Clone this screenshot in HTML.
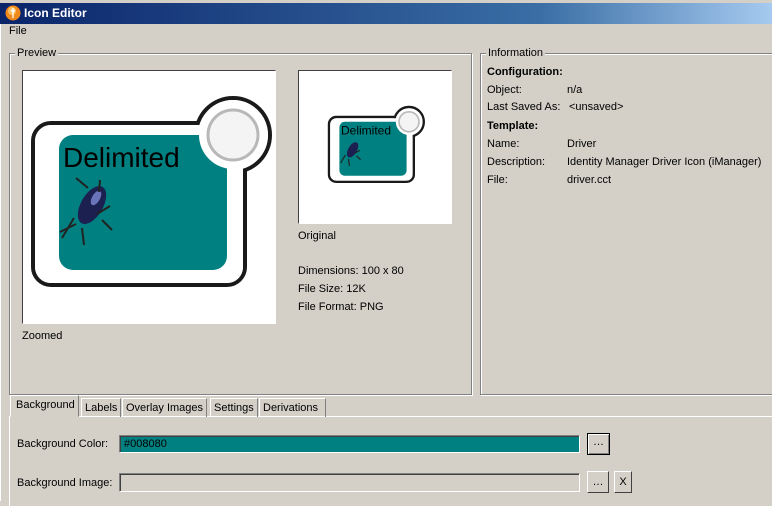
<!DOCTYPE html>
<html><head><meta charset="utf-8"><style>
*{margin:0;padding:0;box-sizing:border-box}
body{width:772px;height:501px;background:#d4d0c8;font:11px "Liberation Sans",sans-serif;color:#000;position:relative;overflow:hidden}
.a{position:absolute;white-space:nowrap}
.title{left:0;top:0;width:772px;height:24px;background:linear-gradient(90deg,#0a246a,#3a6ea5 70%,#a6caf0);border-top:3px solid #d4d0c8}
.title span{position:absolute;left:24px;top:3px;color:#fff;font-weight:bold;font-size:12px}
.grp{border:1px solid #808080;box-shadow:1px 1px 0 #fff inset,1px 1px 0 #fff}
.leg{background:#d4d0c8;padding:0 2px}
.box{background:#fff;border:1px solid;border-color:#404040 #fff #fff #404040}
.sunk{border:1px solid;border-color:#808080 #fff #fff #808080;box-shadow:inset 1px 1px 0 #404040}
.btn{background:#d4d0c8;border:1px solid;border-color:#fff #404040 #404040 #fff;text-align:center;line-height:16px}
.tab{top:398px;height:19px;border:1px solid;border-color:#fff #808080 transparent #fff;padding:3px 3px 0;border-bottom:none}
</style></head><body>
<div class="a title"><span>Icon Editor</span>
<svg class="a" style="left:5px;top:2px" width="16" height="16"><circle cx="8" cy="8" r="7.5" fill="#f08a1c"/><circle cx="7" cy="6" r="4" fill="#fcc060"/><path d="M8 3v10M6 5l2 2 2-2" stroke="#fff" stroke-width="1.3" fill="none"/></svg></div>
<div class="a" style="left:0;top:24px;width:3px;height:477px;background:#d4d0c8;border-left:1px solid #fff"></div>
<div class="a" style="left:9px;top:25px">File</div>
<div class="a grp" style="left:9px;top:53px;width:463px;height:342px"></div>
<div class="a leg" style="left:15px;top:47px">Preview</div>
<div class="a grp" style="left:480px;top:53px;width:295px;height:342px"></div>
<div class="a leg" style="left:486px;top:47px">Information</div>
<div class="a box" style="left:22px;top:70px;width:254px;height:254px;overflow:hidden">
<svg width="252" height="252" style="position:absolute;left:0;top:0">
<g transform="translate(-23 -71)">
<rect x="33" y="123" width="212" height="162" rx="18" fill="#fff" stroke="#1a1a1a" stroke-width="4"/>
<circle cx="233" cy="135" r="37" fill="#fff" stroke="#1a1a1a" stroke-width="4"/>
<rect x="35" y="125" width="208" height="158" rx="16" fill="#fff"/>
<circle cx="233" cy="135" r="35" fill="#fff"/>
<rect x="59" y="135" width="168" height="135" rx="14" fill="#008080"/>
<circle cx="233" cy="135" r="34" fill="#fff"/>
<circle cx="233" cy="135" r="25" fill="#f4f4f4" stroke="#b8b8b8" stroke-width="3"/>
<text x="63" y="167" font-family="Liberation Sans,sans-serif" font-size="28" fill="#000">Delimited</text>
<ellipse cx="92" cy="205" rx="11" ry="21" transform="rotate(30 92 205)" fill="#1c2050"/>
<ellipse cx="96" cy="198" rx="4" ry="8" transform="rotate(30 96 198)" fill="#6a74b8"/>
<path d="M74 218 L62 238 M76 224 L60 232 M82 228 L84 245 M97 214 L110 206 M102 220 L112 230 M88 188 L76 178 M99 192 L100 180" stroke="#222" stroke-width="2"/>
</g></svg></div>
<div class="a" style="left:22px;top:330px">Zoomed</div>
<div class="a box" style="left:298px;top:70px;width:154px;height:154px;overflow:hidden">
<svg width="152" height="152" style="position:absolute;left:0;top:0">
<g transform="translate(16.8 -3.2) scale(0.4)">
<rect x="33" y="123" width="212" height="162" rx="18" fill="#fff" stroke="#1a1a1a" stroke-width="6"/>
<circle cx="233" cy="135" r="37" fill="#fff" stroke="#1a1a1a" stroke-width="6"/>
<rect x="36" y="126" width="206" height="156" rx="16" fill="#fff"/>
<circle cx="233" cy="135" r="34" fill="#fff"/>
<rect x="59" y="135" width="168" height="135" rx="14" fill="#008080"/>
<circle cx="233" cy="135" r="33" fill="#fff"/>
<circle cx="233" cy="135" r="25" fill="#f4f4f4" stroke="#b8b8b8" stroke-width="4"/>
<text x="63" y="167" font-family="Liberation Sans,sans-serif" font-size="30" fill="#000">Delimited</text>
<ellipse cx="92" cy="205" rx="11" ry="21" transform="rotate(30 92 205)" fill="#1c2050"/>
<path d="M74 218 L62 238 M82 228 L84 245 M97 214 L110 206 M102 220 L112 230" stroke="#222" stroke-width="3"/>
</g></svg></div>
<div class="a" style="left:298px;top:230px">Original</div>
<div class="a" style="left:298px;top:265px">Dimensions: 100 x 80</div>
<div class="a" style="left:298px;top:283px">File Size: 12K</div>
<div class="a" style="left:298px;top:301px">File Format: PNG</div>
<div class="a" style="left:487px;top:66px;font-weight:bold">Configuration:</div>
<div class="a" style="left:487px;top:84px">Object:</div><div class="a" style="left:567px;top:84px">n/a</div>
<div class="a" style="left:487px;top:101px">Last Saved As:</div><div class="a" style="left:569px;top:101px">&lt;unsaved&gt;</div>
<div class="a" style="left:487px;top:120px;font-weight:bold">Template:</div>
<div class="a" style="left:487px;top:138px">Name:</div><div class="a" style="left:567px;top:138px">Driver</div>
<div class="a" style="left:487px;top:156px">Description:</div><div class="a" style="left:567px;top:156px">Identity Manager Driver Icon (iManager)</div>
<div class="a" style="left:487px;top:174px">File:</div><div class="a" style="left:567px;top:174px">driver.cct</div>
<div class="a" style="left:9px;top:416px;width:770px;height:90px;border-left:1px solid #fff;border-top:1px solid #fff"></div>
<div class="a tab" style="left:10px;top:395px;height:22px;padding-left:5px;background:#d4d0c8;z-index:2;border-bottom:1px solid #d4d0c8">Background</div>
<div class="a tab" style="left:81px">Labels</div>
<div class="a tab" style="left:122px">Overlay Images</div>
<div class="a tab" style="left:210px">Settings</div>
<div class="a tab" style="left:259px;width:67px">Derivations</div>
<div class="a" style="left:17px;top:438px">Background Color:</div>
<div class="a sunk" style="left:119px;top:435px;width:461px;height:18px;background:#008080;padding:2px 0 0 4px">#008080</div>
<div class="a btn" style="left:587px;top:433px;width:23px;height:22px;border:1px solid #000;box-shadow:inset 1px 1px 0 #fff,inset -1px -1px 0 #808080;line-height:16px">…</div>
<div class="a" style="left:17px;top:477px">Background Image:</div>
<div class="a sunk" style="left:119px;top:473px;width:461px;height:19px"></div>
<div class="a btn" style="left:587px;top:471px;width:22px;height:22px;line-height:20px">…</div>
<div class="a btn" style="left:614px;top:471px;width:18px;height:22px;line-height:20px">X</div>
</body></html>
